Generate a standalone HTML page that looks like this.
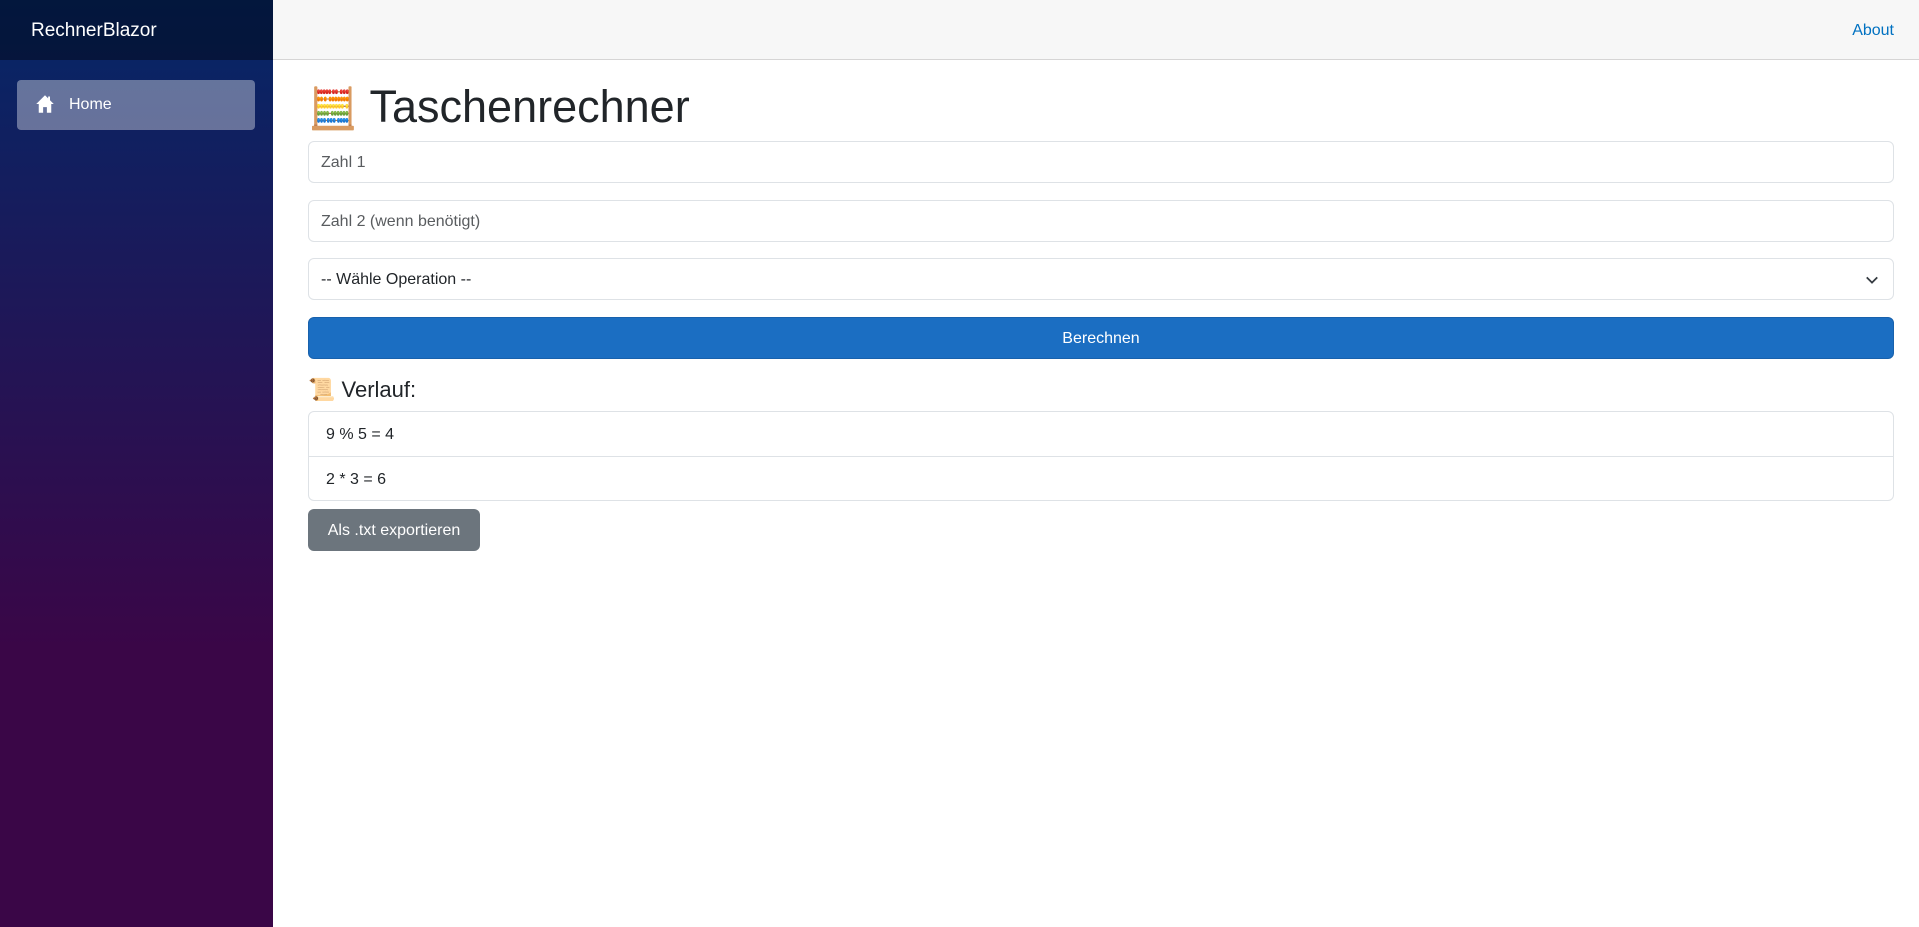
<!DOCTYPE html>
<html><head><meta charset="utf-8"><style>
*{box-sizing:border-box;margin:0;padding:0}
body{width:1919px;height:927px;overflow:hidden;font-family:"Liberation Sans",Arial,sans-serif;font-size:16px;color:#212529;background:#fff;position:relative}
.side{position:absolute;left:0;top:0;width:273px;height:927px;background:linear-gradient(180deg,rgb(5,39,103) 0%,#3a0647 70%)}
.brand{height:60px;background:rgba(0,0,0,0.4);color:#fff;font-size:19px;padding-left:31px;line-height:62px}
.home{position:absolute;left:17px;top:80px;width:238px;height:50px;background:rgba(255,255,255,0.37);border-radius:4px;color:#fff;font-size:16px;line-height:50px;padding-left:52px}
.home svg{position:absolute;left:18px;top:14px}
.top{position:absolute;left:273px;top:0;right:0;height:60px;background:#f7f7f7;border-bottom:1px solid #d6d5d5}
.top a{position:absolute;right:25px;top:22px;color:#0071c1;text-decoration:none;font-size:16px}
.el{position:absolute;left:308px;width:1586px}
.inp{height:42px;border:1px solid #dee2e6;border-radius:6px;padding:0 12px;line-height:42px;color:#595c5f}
h1{font-weight:400;font-size:45px;top:80px;line-height:54px}
.btn{height:42px;background:#1b6ec2;border:1px solid #1861ac;border-radius:6px;color:#fff;text-align:center;line-height:42px}
.list{border:1px solid #dee2e6;border-radius:6px}
.list div{height:44px;line-height:46px;padding-left:17px}
.list div+div{border-top:1px solid #dee2e6}
.exp{position:absolute;left:308px;top:509px;width:172px;height:42px;background:#6c757d;border-radius:6px;color:#fff;text-align:center;line-height:44px}
</style></head><body>
<div class="side"><div class="brand">RechnerBlazor</div>
<div class="home"><svg width="20" height="20" viewBox="0 0 16 16"><path fill="#fff" d="M8 1 L1 8 H3 V15 H6.5 V10.5 H9.5 V15 H13 V8 H15 L12 5 V2 H10.5 V3.5 Z"/></svg>Home</div></div>
<div class="top"><a>About</a></div>
<h1 class="el" style="top:80px"><span style="font-size:40px">🧮</span> Taschenrechner</h1>
<div class="el inp" style="top:141px">Zahl 1</div>
<div class="el inp" style="top:200px">Zahl 2 (wenn benötigt)</div>
<div class="el inp" style="top:258px;color:#212529">-- Wähle Operation --<svg style="position:absolute;right:14px;top:14px" width="14" height="14" viewBox="0 0 16 16"><path d="M2 5l6 6 6-6" fill="none" stroke="#343a40" stroke-width="2"/></svg></div>
<div class="el btn" style="top:317px">Berechnen</div>
<div class="el" style="top:376px;font-size:22px;line-height:28px">📜 Verlauf:</div>
<div class="el list" style="top:411px"><div>9 % 5 = 4</div><div>2 * 3 = 6</div></div>
<div class="exp">Als .txt exportieren</div>
</body></html>
